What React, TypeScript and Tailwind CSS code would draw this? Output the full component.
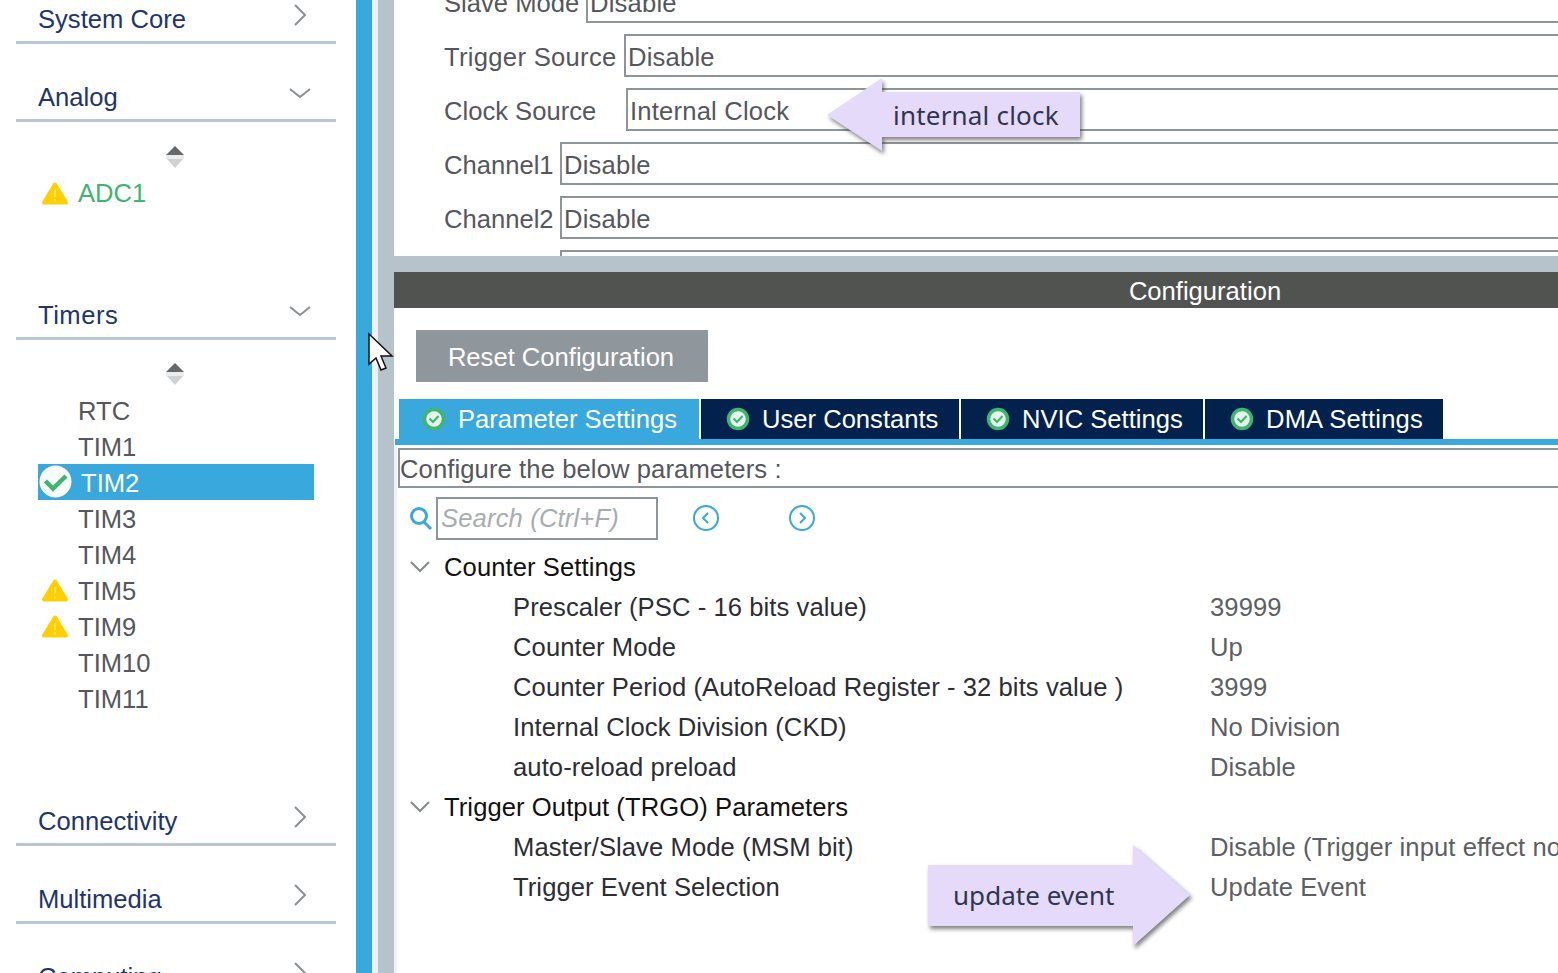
import React from 'react';

const FONT = "font-['Liberation_Sans',Arial,sans-serif]";

function Chevron({ open }: { open?: boolean }) {
  return (
    <svg className="absolute right-[24px] top-[4px]" width="24" height="24" viewBox="0 0 24 24" fill="none" stroke="#8a8f94" strokeWidth="2">
      {open ? <path d="M2 7 L12 15 L22 7" /> : <path d="M7 1 L17 11 L7 21" />}
    </svg>
  );
}

function Header({ title, open, titleClass }: { title: string; open?: boolean; titleClass?: string }) {
  return (
    <div className="relative ml-[16px] mr-[20px] h-[44px] border-b-[3px] border-[#b9c6d4] pl-[22px] text-[25.6px] leading-[38px] text-[#21356b]">
      <span className={titleClass}>{title}</span>
      <Chevron open={open} />
    </div>
  );
}

function SortArrows() {
  return (
    <svg className="ml-[165px] block" width="20" height="22" viewBox="0 0 20 22">
      <rect x="1" y="9" width="18" height="4" fill="#ececec" />
      <path d="M10 0 L19 9 L1 9 Z" fill="#66696b" />
      <path d="M2 13 L18 13 L10 22 Z" fill="#cfd1d2" />
    </svg>
  );
}

function Warn() {
  return (
    <svg className="absolute left-[41px] top-[6px]" width="28" height="24" viewBox="0 0 28 24">
      <path d="M14 3.5 L25 21.5 L3 21.5 Z" fill="#ffcf00" stroke="#ffcf00" strokeWidth="4" strokeLinejoin="round" />
      <path d="M14 9 L14 16 M14 18 L14 21" stroke="#ffe680" strokeWidth="1.5" />
    </svg>
  );
}

function TimerRow({ name, warn, selected }: { name: string; warn?: boolean; selected?: boolean }) {
  if (selected) {
    return (
      <div className="relative ml-[38px] flex h-[36px] w-[276px] items-center bg-[#39a8dc] pl-[43px] pt-[2px] text-white">
        {name}
        <svg className="absolute left-[1px] top-[1px]" width="33" height="33" viewBox="0 0 33 33">
          <circle cx="16.5" cy="16.5" r="16" fill="#f7fbfa" />
          <path d="M6.5 16 L14 23.5 L27 11" fill="none" stroke="#3fb56f" strokeWidth="4.5" />
        </svg>
      </div>
    );
  }
  return (
    <div className="relative flex h-[36px] items-center pl-[78px] pt-[2px] text-[#55575c]">
      {warn && <Warn />}
      {name}
    </div>
  );
}

function SidebarGroup({ title, titleClass, children }: { title: string; titleClass?: string; children: React.ReactNode }) {
  return (
    <div>
      <Header title={title} titleClass={titleClass} open />
      <div>{children}</div>
    </div>
  );
}

function Sidebar() {
  return (
    <aside className="h-full w-[356px] shrink-0 overflow-hidden bg-white text-[25.6px]">
      <Header title="System Core" />
      <div className="mt-[34px]">
        <SidebarGroup title="Analog">
          <div className="h-[140px] pt-[24px]">
            <SortArrows />
            <div className="relative mt-[7px] flex h-[36px] items-center pl-[78px] text-[#3fb56f]">
              <Warn />
              ADC1
            </div>
          </div>
        </SidebarGroup>
      </div>
      <div className="mt-[34px]">
        <SidebarGroup title="Timers" titleClass="tracking-[0.5px]">
          <div className="h-[428px] pt-[23px]">
            <SortArrows />
            <div className="mt-[7px]">
              <TimerRow name="RTC" />
              <TimerRow name="TIM1" />
              <TimerRow name="TIM2" selected />
              <TimerRow name="TIM3" />
              <TimerRow name="TIM4" />
              <TimerRow name="TIM5" warn />
              <TimerRow name="TIM9" warn />
              <TimerRow name="TIM10" />
              <TimerRow name="TIM11" />
            </div>
          </div>
        </SidebarGroup>
      </div>
      <div className="mt-[34px]"><Header title="Connectivity" /></div>
      <div className="mt-[34px]"><Header title="Multimedia" /></div>
      <div className="mt-[34px]"><Header title="Computing" /></div>
    </aside>
  );
}

function ModeRow({ label, labelClass, value }: { label: string; labelClass: string; value: string }) {
  return (
    <div className="flex h-[43px] items-center">
      <div className={`${labelClass} shrink-0 pl-[50px] pt-[4px] text-[#55575c]`}>{label}</div>
      <div className="-mr-[10px] flex h-[43px] flex-1 items-center border-2 border-[#8d9599] pl-[2px] pt-[3px] tracking-[0.2px] text-[#55575c]">{value}</div>
    </div>
  );
}

function TabIcon() {
  return (
    <svg width="24" height="24" viewBox="0 0 24 24" className="-mx-px shrink-0">
      <circle cx="12" cy="12" r="9.5" fill="#e6f5ec" stroke="#3fb56f" strokeWidth="3.5" />
      <path d="M7.5 11.5 L11 15 L16.5 9" fill="none" stroke="#3fb56f" strokeWidth="2" />
    </svg>
  );
}

function Tab({ label, className }: { label: string; className: string }) {
  return (
    <div className={`flex h-[40px] items-center text-white ${className}`}>
      <TabIcon />
      <span>{label}</span>
    </div>
  );
}

function CircleNav({ left }: { left?: boolean }) {
  return (
    <svg width="28" height="28" viewBox="0 0 28 28" fill="none" stroke="#39a8dc">
      <circle cx="14" cy="14" r="12" strokeWidth="2" />
      <path d={left ? 'M16 9 L11 14 L16 19' : 'M12 9 L17 14 L12 19'} strokeWidth="2" />
    </svg>
  );
}

function TreeHead({ label }: { label: string }) {
  return (
    <div className="flex h-[40px] items-center tracking-[0.08px] text-[#111111]">
      <svg className="ml-[12px] mr-[13px]" width="22" height="14" viewBox="0 0 22 14" fill="none" stroke="#85898c" strokeWidth="2">
        <path d="M2 2 L11 11 L20 2" />
      </svg>
      {label}
    </div>
  );
}

function TreeRow({ label, value }: { label: string; value: string }) {
  return (
    <div className="flex h-[40px] items-center whitespace-nowrap tracking-[0.08px]">
      <div className="w-[813px] shrink-0 pl-[116px] text-[#2c2e33]">{label}</div>
      <div className="text-[#5c5f63]">{value}</div>
    </div>
  );
}

function MainPanel() {
  return (
    <main className="h-full min-w-0 flex-1 overflow-hidden bg-white text-[25.6px]">
      <div className="h-[256px] overflow-hidden">
        <div className="-mt-[20px] flex flex-col gap-[11px]">
          <ModeRow label="Slave Mode" labelClass="w-[192px]" value="Disable" />
          <ModeRow label="Trigger Source" labelClass="w-[230px] tracking-[0.3px]" value="Disable" />
          <ModeRow label="Clock Source" labelClass="w-[232px]" value="Internal Clock" />
          <ModeRow label="Channel1" labelClass="w-[166px]" value="Disable" />
          <ModeRow label="Channel2" labelClass="w-[166px]" value="Disable" />
          <ModeRow label="Channel3" labelClass="w-[166px]" value="Disable" />
        </div>
      </div>
      <div className="h-[16px] bg-[#b7c3ca]" />
      <div className="flex h-[36px] items-center justify-center bg-[#515351] pl-[458px] pt-[2px] text-white">Configuration</div>

      <div className="ml-[22px] mt-[22px] flex h-[52px] w-[292px] items-center justify-center bg-[#8f969c] pr-[2px] pt-[2px] text-white">Reset Configuration</div>

      <div className="ml-[5px] mt-[17px] flex gap-[2px]">
        <Tab label="Parameter Settings" className="w-[300px] gap-[13px] bg-[#39a8dc] pl-[24px]" />
        <Tab label="User Constants" className="w-[258px] gap-[13px] bg-[#02224d] pl-[26px]" />
        <Tab label="NVIC Settings" className="w-[242px] gap-[13px] bg-[#02224d] pl-[26px]" />
        <Tab label="DMA Settings" className="w-[238px] gap-[13px] bg-[#02224d] pl-[26px] tracking-[0.15px]" />
      </div>
      <div className="ml-[1px] h-[6px] bg-[#39a8dc]" />

      <div className="h-[528px] border-l-[3px] border-[#eef0f5] pt-[3px]">
        <div className="-mr-[10px] ml-[1px] flex h-[40px] items-center border-2 border-[#8d9599] pt-[2px] tracking-[0.1px] text-[#55575c]">
          Configure the below parameters :
        </div>

        <div className="mt-[8px] flex h-[44px] items-center">
          <svg className="ml-[12px]" width="24" height="26" viewBox="0 0 24 26" fill="none" stroke="#39a8dc" strokeWidth="3">
            <circle cx="10" cy="11" r="7.5" />
            <path d="M15 17 L22 24" />
          </svg>
          <div className="ml-[3px] flex h-[43px] w-[222px] items-center border-2 border-[#8d9599] pl-[3px] italic tracking-[0.15px] text-[#a9acaf]">Search (Ctrl+F)</div>
          <div className="ml-[34px]"><CircleNav left /></div>
          <div className="ml-[68px]"><CircleNav /></div>
        </div>

        <div className="mt-[7px]">
          <TreeHead label="Counter Settings" />
          <TreeRow label="Prescaler (PSC - 16 bits value)" value="39999" />
          <TreeRow label="Counter Mode" value="Up" />
          <TreeRow label="Counter Period (AutoReload Register - 32 bits value )" value="3999" />
          <TreeRow label="Internal Clock Division (CKD)" value="No Division" />
          <TreeRow label="auto-reload preload" value="Disable" />
          <TreeHead label="Trigger Output (TRGO) Parameters" />
          <TreeRow label="Master/Slave Mode (MSM bit)" value="Disable (Trigger input effect not delayed)" />
          <TreeRow label="Trigger Event Selection" value="Update Event" />
        </div>
      </div>
    </main>
  );
}

function Callout({ className, width, height, points, label, textClass }: { className: string; width: number; height: number; points: string; label: string; textClass: string }) {
  return (
    <div className={`absolute ${className}`} style={{ width, height }}>
      <svg width={width} height={height} className="absolute left-0 top-0 drop-shadow-[2px_3px_2px_rgba(60,60,60,0.65)]">
        <polygon points={points} fill="#e6dafb" />
      </svg>
      <div className={`absolute whitespace-nowrap font-['Noto_Sans',sans-serif] text-[26px] leading-[36px] text-[#2f3650] ${textClass}`}>{label}</div>
    </div>
  );
}

export default function App() {
  return (
    <div className={`relative flex h-[973px] w-[1558px] overflow-hidden bg-white ${FONT}`}>
      <Sidebar />
      <div className="h-full w-[16px] shrink-0 bg-[#39a8dc]" />
      <div className="h-full w-[6px] shrink-0 bg-[#eef0f5]" />
      <div className="h-full w-[16px] shrink-0 bg-[#b7c3ca]" />
      <MainPanel />

      <Callout className="left-[827px] top-[78px]" width={256} height={76} points="0,37 55,0 55,14 253,14 253,59 55,59 55,73" label="internal clock" textClass="left-[66px] top-[19px] tracking-[0.2px]" />
      <Callout className="left-[928px] top-[845px]" width={265} height={104} points="0,20 205,20 205,0 262,50 205,101 205,81 0,81" label="update event" textClass="left-[25px] top-[32px] tracking-[0.05px]" />

      <svg className="absolute left-[367px] top-[332px]" width="28" height="42" viewBox="0 0 28 42">
        <path d="M2 2 L2 32 L9 26 L14 38 L19 36 L14 24 L25 24 Z" fill="#ffffff" stroke="#111111" strokeWidth="1.5" />
      </svg>
    </div>
  );
}
